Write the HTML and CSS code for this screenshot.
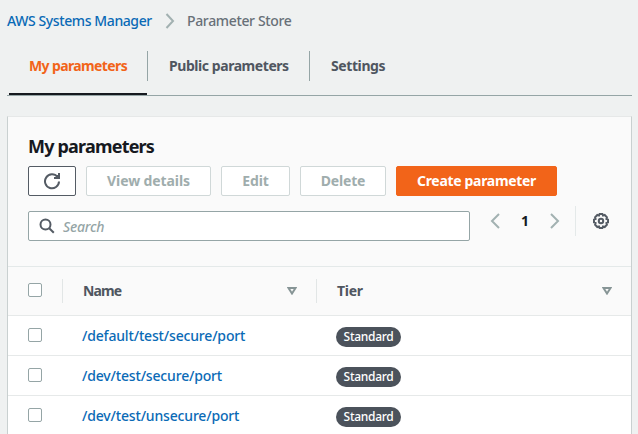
FILE: index.html
```html
<!DOCTYPE html>
<html lang="en">
<head>
<meta charset="utf-8">
<title>Parameter Store</title>
<link rel="stylesheet" href="styles.css">
</head>
<body>
<nav class="crumbs">
  <a class="crumb-link" href="#">AWS Systems Manager</a>
  <svg class="crumb-sep" width="10" height="16" viewBox="0 0 10 16"><path d="M1.500 1 8 8l-6.500 7"/></svg>
  <span class="crumb-current">Parameter Store</span>
</nav>
<div class="tabs">
  <div class="tab tab-active"><span class="t-my">My parameters</span></div>
  <div class="tab"><span class="t-public">Public parameters</span></div>
  <div class="tab"><span class="t-settings">Settings</span></div>
</div>
<main class="panel">
  <header class="panel-head">
    <h1>My parameters</h1>
    <div class="actions">
      <button class="btn btn-refresh" aria-label="Refresh"><svg width="18" height="18" viewBox="0 0 18 18"><path d="M16 9.500A7 7 0 1 1 14.500 5"/><path d="M16 1v5h-5"/><path class="solid" d="M15.500 2.500v3h-3z"/></svg></button>
      <button class="btn btn-view" disabled>View details</button>
      <button class="btn btn-edit" disabled>Edit</button>
      <button class="btn btn-delete" disabled>Delete</button>
      <button class="btn btn-primary">Create parameter</button>
    </div>
    <div class="filter">
      <div class="search"><svg width="16" height="16" viewBox="0 0 16 16"><circle cx="6.500" cy="6.500" r="5"/><path d="m10.200 10.200 4.600 4.600"/></svg><span>Search</span></div>
      <svg class="page-prev" width="10" height="16" viewBox="0 0 10 16"><path d="M9 1 2 8l7 7"/></svg>
      <span class="page">1</span>
      <svg class="page-next" width="10" height="16" viewBox="0 0 10 16"><path d="m1 1 7 7-7 7"/></svg>
      <div class="prefs"><svg width="16" height="16" viewBox="0 0 16 16"><path d="M6.600 1h2.800l.6 1.500 1.700-.5 2.200 2.200-.5 1.700 1.600.7v2.800l-1.600.7.5 1.700-2.200 2.200-1.700-.5L9.400 15H6.600L6 13.500l-1.700.5-2.200-2.200.5-1.700L1 9.400V6.600l1.600-.7-.5-1.700L4.300 2l1.700.5z"/><circle cx="8" cy="8" r="2.200"/></svg></div>
    </div>
  </header>
  <div class="row row-head">
    <div class="cell-check"><i class="box"></i></div>
    <div class="cell-name"><b class="th-name">Name</b><svg width="10" height="8" viewBox="0 0 10 8"><path d="M1.500 1h7L5 6.500z"/></svg></div>
    <div class="cell-tier"><b class="th-tier">Tier</b><svg width="10" height="8" viewBox="0 0 10 8"><path d="M1.500 1h7L5 6.500z"/></svg></div>
  </div>
  <div class="row">
    <div class="cell-check"><i class="box"></i></div>
    <div class="cell-name"><a href="#">/default/test/secure/port</a></div>
    <div class="cell-tier"><span class="badge">Standard</span></div>
  </div>
  <div class="row">
    <div class="cell-check"><i class="box"></i></div>
    <div class="cell-name"><a href="#">/dev/test/secure/port</a></div>
    <div class="cell-tier"><span class="badge">Standard</span></div>
  </div>
  <div class="row">
    <div class="cell-check"><i class="box"></i></div>
    <div class="cell-name"><a href="#">/dev/test/unsecure/port</a></div>
    <div class="cell-tier"><span class="badge">Standard</span></div>
  </div>
</main>
</body>
</html>
```
FILE: styles.css
```css
* { box-sizing: border-box; }
html, body { margin: 0; height: 434px; overflow: hidden; }
body {
  background: #eff1f1;
  color: #16191f;
  font: 14px/20px "Noto Sans", "Open Sans", sans-serif;
  padding: 0 6px 0 7px;
}
a { color: #0a6ab6; text-decoration: none; }
svg { display: block; flex: none; fill: none; stroke: #545b64; }
button { font: inherit; }

.crumbs { display: flex; align-items: center; height: 42px; white-space: nowrap; }
.crumb-link { width: 158px; font-weight: 500; letter-spacing: -.4px; }
.crumb-sep { stroke: #a2b1b1; stroke-width: 2; }
.crumb-current { margin-left: 12px; color: #687078; font-weight: 500; letter-spacing: -.35px; }

.tabs { display: flex; height: 54px; padding: 9px 0 0 2px; border-bottom: 1px solid #95a5a6; }
.tab {
  height: 30px;
  padding: 5px 20px 0 21px;
  border-left: 1px solid #95a5a6;
  color: #4f5660;
  font-weight: 700;
  white-space: nowrap;
}
.tab-active {
  width: 138px;
  height: 44px;
  padding-left: 20px;
  border-left: 0;
  border-bottom: 2px solid #16191f;
  color: #f26419;
}
.tab:nth-child(2) { width: 162px; }
.t-my { letter-spacing: -.62px; }
.t-public { letter-spacing: -.44px; }
.t-settings { letter-spacing: -.4px; }

.panel {
  height: 330px;
  margin-top: 20px;
  border: 1px solid #c9d0d0;
  border-top-color: #e6e8e8;
  border-bottom: 0;
  background: #fff;
}
.panel-head { height: 150px; padding: 18px 20px 0; background: #fafafa; border-bottom: 1px solid #e4e9e9; }
h1 { margin: 0; height: 31px; font-size: 18px; line-height: 22px; letter-spacing: -.8px; }
.actions { display: flex; gap: 10px; }
.btn {
  height: 30px;
  padding: 0;
  border: 1px solid #d0d8d8;
  border-radius: 2px;
  background: #fff;
  color: #9fadad;
  font-weight: 700;
  line-height: 28px;
  letter-spacing: -.15px;
  white-space: nowrap;
}
.btn-refresh { width: 48px; border-color: #545b64; display: flex; align-items: center; justify-content: center; }
.btn-refresh svg { stroke-width: 2; }
.btn-refresh .solid { fill: #545b64; stroke-width: 1; }
.btn-view { width: 125px; letter-spacing: -.1px; }
.btn-edit { width: 69px; }
.btn-delete { width: 86px; }
.btn-primary { width: 161px; background: #f26419; border-color: #f26419; color: #fff; letter-spacing: -.32px; }

.filter { display: flex; align-items: center; height: 30px; margin-top: 15px; }
.search {
  display: flex;
  align-items: center;
  width: 442px;
  height: 30px;
  padding-left: 10px;
  border: 1px solid #95a5a6;
  border-radius: 2px;
  background: #fff;
  color: #95a5a6;
  font-style: italic;
}
.search svg { stroke-width: 2; }
.search span { margin: 2px 0 0 8px; font-weight: 500; letter-spacing: -.2px; }
.page-prev, .page-next { margin-bottom: 10px; stroke: #a2b1b1; stroke-width: 2; }
.page-prev { margin-left: 20px; }
.page { width: 50px; margin-bottom: 10px; text-align: center; font-weight: 700; }
.prefs { height: 30px; margin: 0 0 10px 15px; padding: 7px 0 0 17px; border-left: 1px solid #e4e9e9; }
.prefs svg { stroke-width: 2; }

.row { display: flex; align-items: center; height: 40px; border-bottom: 1px solid #e6e9e9; }
.row-head { height: 49px; background: #fafafa; color: #4f5660; }
.cell-check { width: 54px; padding-left: 20px; }
.box { display: block; width: 14px; height: 14px; border: 1px solid #95a5a6; border-radius: 2px; background: #fff; }
.row .box { margin-bottom: 1px; }
.row-head .box { margin-bottom: 2px; }
.cell-name { display: flex; align-items: center; width: 254px; padding-left: 20px; white-space: nowrap; }
.cell-name a { font-weight: 500; letter-spacing: -.17px; }
.cell-tier { display: flex; align-items: center; flex: 1; padding-left: 20px; }
.row-head .cell-name, .row-head .cell-tier { height: 24px; border-left: 1px solid #e2e6e6; justify-content: space-between; padding-right: 19px; }
.th-name { letter-spacing: -.9px; }
.th-tier { letter-spacing: -.3px; }
.row-head svg { stroke: #879596; stroke-width: 2; }
.badge {
  width: 65px;
  height: 20px;
  margin-top: 3px;
  border-radius: 10px;
  background: #4b525b;
  color: #fff;
  font-size: 12px;
  font-weight: 500;
  letter-spacing: -.3px;
  text-align: center;
}
```
